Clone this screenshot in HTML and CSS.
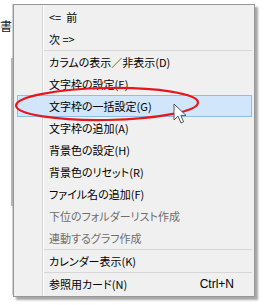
FILE: index.html
```html
<!DOCTYPE html>
<html lang="ja">
<head>
  <meta charset="UTF-8" />
  <title>コンテキストメニュー</title>
  <link rel="stylesheet" href="styles.css">
</head>
<body>

  <div class="page">
    <div class="page-text">書</div>
    <div class="page-frame"></div>
    <div class="page-thumb"></div>
  </div>

  <div class="menu">
    <div class="menu-item"><span class="label">&lt;=&nbsp;&nbsp;前</span></div>
    <div class="menu-item"><span class="label">次&nbsp;=&gt;</span></div>
    <div class="menu-sep"></div>
    <div class="menu-item"><span class="label">カラムの表示／非表示(D)</span></div>
    <div class="menu-item"><span class="label">文字枠の設定(E)</span></div>
    <div class="menu-item active"><span class="label">文字枠の一括設定(G)</span></div>
    <div class="menu-item"><span class="label">文字枠の追加(A)</span></div>
    <div class="menu-item"><span class="label">背景色の設定(H)</span></div>
    <div class="menu-item"><span class="label">背景色のリセット(R)</span></div>
    <div class="menu-item"><span class="label">ファイル名の追加(F)</span></div>
    <div class="menu-item disabled"><span class="label">下位のフォルダーリスト作成</span></div>
    <div class="menu-item disabled"><span class="label">連動するグラフ作成</span></div>
    <div class="menu-sep"></div>
    <div class="menu-item"><span class="label">カレンダー表示(K)</span></div>
    <div class="menu-sep"></div>
    <div class="menu-item"><span class="label">参照用カード(N)</span><span class="shortcut">Ctrl+N</span></div>
  </div>

  <!-- annotation ring around the highlighted item -->
  <svg class="ring" width="200" height="40" viewBox="0 0 200 40">
    <ellipse cx="99" cy="18" rx="91" ry="16" fill="none" stroke="#e8161b" stroke-width="2.2" transform="rotate(-1 99 18)"/>
  </svg>

  <svg class="cursor" width="14" height="22" viewBox="0 0 14 22">
    <path d="M1 1 L1 17 L5 13.2 L8 20 L10.6 18.8 L7.8 12.4 L13 12.4 Z" fill="#fff" stroke="#555" stroke-width="1" stroke-linejoin="round"/>
  </svg>

</body>
</html>
```

FILE: styles.css
```css
* {
  box-sizing: border-box;
  margin: 0;
  padding: 0;
}

body {
  background: #fff;
  width: 270px;
  height: 305px;
  overflow: hidden;
  position: relative;
  font-family: "Noto Sans CJK JP", "Liberation Sans", sans-serif;
}

.page {
  height: 100%;
  display: flex;
  position: relative;
}

.page-text {
  font-size: 12px;
  line-height: 14px;
  margin-top: 19px;
  color: #111;
}

.page-frame {
  position: absolute;
  left: 12px;
  top: 4px;
  width: 1px;
  height: 291px;
  background: #cfcfcf;
}

.page-thumb {
  position: absolute;
  left: 11px;
  top: 58px;
  width: 2px;
  height: 148px;
  background: #b4b4b4;
}

.menu {
  position: absolute;
  left: 13px;
  top: 4px;
  width: 242px;
  height: 293px;
  background: #f0f0f0;
  border: 1px solid #979797;
  box-shadow: 3px 3px 2px rgba(0, 0, 0, 0.35);
  padding: 1px 2px 1px 3px;
  display: flex;
  flex-direction: column;
}

.menu::before {
  content: "";
  position: absolute;
  left: 28px;
  top: 0;
  bottom: 0;
  width: 1px;
  background: #d7d7d7;
  border-right: 1px solid #fff;
  box-sizing: content-box;
}

.menu-item {
  height: 22px;
  display: flex;
  align-items: center;
  padding-left: 31px;
  padding-right: 17px;
  font-size: 11px;
  color: #000;
  border: 1px solid transparent;
  position: relative;
}

.menu-item .label {
  flex: 1;
  font-feature-settings: "palt";
}

.menu-item .shortcut {
  font-family: "Liberation Sans", sans-serif;
  font-size: 12px;
}

.menu-item.active {
  background: #d1e6fb;
  border-color: #8cbdeb;
}

.menu-item.disabled {
  color: #6d6d6d;
}

.menu-sep {
  height: 1px;
  margin-left: 27px;
  background: #d7d7d7;
  position: relative;
}

.ring {
  position: absolute;
  left: 8px;
  top: 86px;
}

.cursor {
  position: absolute;
  left: 173px;
  top: 103px;
}
```
